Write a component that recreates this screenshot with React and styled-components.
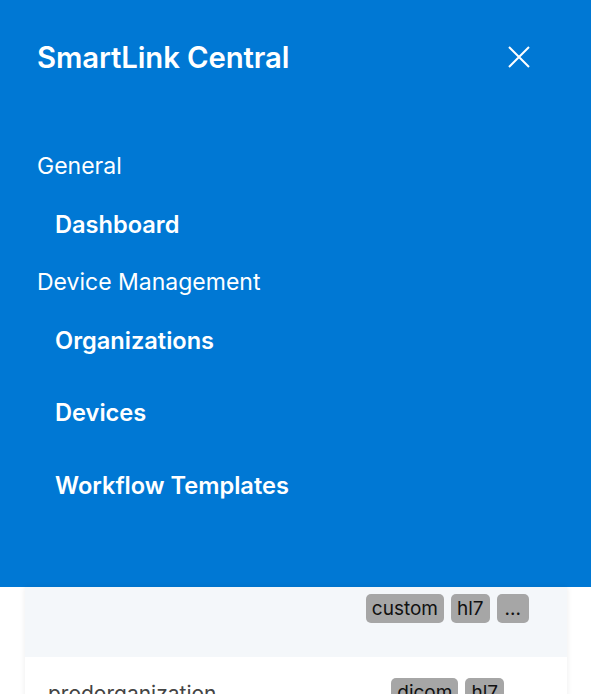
import React from "react";
import styled, { createGlobalStyle } from "styled-components";

const GlobalStyle = createGlobalStyle`
  html, body {
    margin: 0;
    padding: 0;
    background: #ffffff;
    font-family: Inter, "Noto Sans", sans-serif;
  }
`;

const Page = styled.div`
  width: 591px;
  height: 694px;
  overflow: hidden;
  background: #ffffff;
`;

const Menu = styled.nav`
  height: 587px;
  background: #0078d4;
  color: #ffffff;
  padding: 0 37px;
  box-sizing: border-box;
`;

const Header = styled.div`
  display: flex;
  align-items: center;
  justify-content: space-between;
  height: 114px;
`;

const Title = styled.h1`
  margin: 0;
  font-size: 29.3px;
  font-weight: 600;
  letter-spacing: -0.1px;
`;

const CloseButton = styled.button`
  border: 0;
  background: none;
  padding: 0;
  width: 40px;
  height: 40px;
  margin-right: 15px;
  display: flex;
  align-items: center;
  justify-content: center;
  color: #ffffff;
  cursor: pointer;
`;

const List = styled.div`
  padding-top: 23px;
`;

const Group = styled.div`
  font-size: 23px;
  font-weight: 400;
  height: 58px;
  display: flex;
  align-items: center;
`;

const Item = styled.a`
  display: flex;
  align-items: center;
  padding-left: 18px;
  height: 58px;
  margin-top: ${(p) => p.space || 0}px;
  font-size: 23.6px;
  font-weight: 600;
  color: #ffffff;
  text-decoration: none;
`;

const Card = styled.div`
  margin: 0 24px 0 25px;
  box-shadow: 0 0 6px rgba(0, 0, 0, 0.08);
`;

const Row = styled.div`
  display: flex;
  align-items: flex-start;
  justify-content: space-between;
  height: ${(p) => p.h}px;
  background: ${(p) => p.bg};
  padding: ${(p) => p.pt}px ${(p) => p.pr}px 0 23px;
  box-sizing: border-box;
`;

const Name = styled.span`
  font-size: 21px;
  color: #444;
  margin-top: 3px;
`;

const Tags = styled.div`
  display: flex;
  gap: 7px;
`;

const Tag = styled.span`
  background: #a6a6a6;
  color: #111;
  font-size: 19px;
  line-height: 29px;
  padding: 0 ${(p) => (p.more ? 8 : 6)}px;
  border-radius: 5px;
`;

export default function App() {
  return (
    <Page>
      <GlobalStyle />
      <Menu>
        <Header>
          <Title>SmartLink Central</Title>
          <CloseButton aria-label="Close">
            <svg width="22" height="22" viewBox="0 0 22 22" fill="none" stroke="currentColor" strokeWidth="2">
              <path d="M1 1 L21 21 M21 1 L1 21" />
            </svg>
          </CloseButton>
        </Header>
        <List>
          <Group>General</Group>
          <Item>Dashboard</Item>
          <Group>Device Management</Group>
          <Item>Organizations</Item>
          <Item space={14}>Devices</Item>
          <Item space={15}>Workflow Templates</Item>
        </List>
      </Menu>
      <Card>
        <Row h={70} bg="#f4f7fa" pt={7} pr={38}>
          <span />
          <Tags>
            <Tag>custom</Tag>
            <Tag>hl7</Tag>
            <Tag more>...</Tag>
          </Tags>
        </Row>
        <Row h={60} bg="#ffffff" pt={21} pr={63}>
          <Name>prodorganization</Name>
          <Tags>
            <Tag>dicom</Tag>
            <Tag>hl7</Tag>
          </Tags>
        </Row>
      </Card>
    </Page>
  );
}
